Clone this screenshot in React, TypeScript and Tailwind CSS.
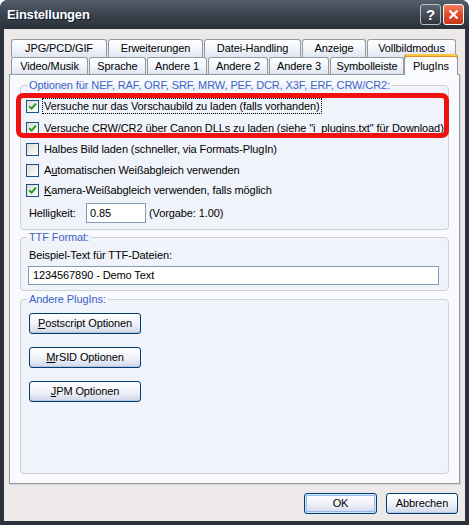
import React from "react";

const row1 = [
  { label: "JPG/PCD/GIF", w: "w-[96px]" },
  { label: "Erweiterungen", w: "w-[95px]" },
  { label: "Datei-Handling", w: "w-[97px]" },
  { label: "Anzeige", w: "w-[64px]" },
  { label: "Vollbildmodus", w: "w-[89px]" },
];

const row2 = [
  { label: "Video/Musik", w: "w-[77px]" },
  { label: "Sprache", w: "w-[57px]" },
  { label: "Andere 1", w: "w-[60px]" },
  { label: "Andere 2", w: "w-[60px]" },
  { label: "Andere 3", w: "w-[60px]" },
  { label: "Symbolleiste", w: "w-[74px]" },
];

const Tab = ({ label, w, h }: { label: string; w: string; h: string }) => (
  <div
    className={`${w} ${h} shrink-0 flex items-center justify-center border border-b-0 border-[#919b9c] rounded-t-[3px] bg-gradient-to-b from-white via-[#f3f5fb] to-[#dfe5f2] leading-none whitespace-nowrap`}
  >
    {label}
  </div>
);

const Check = ({ checked }: { checked?: boolean }) => (
  <span className="w-[13px] h-[13px] shrink-0 border border-[#1c5180] bg-gradient-to-br from-[#dcdcd7] to-white flex items-center justify-center">
    {checked && (
      <svg width="9" height="9" viewBox="0 0 9 9">
        <path d="M1.2 4.2 L3.6 6.6 L7.9 1.6" stroke="#21a121" strokeWidth="2" fill="none" />
      </svg>
    )}
  </span>
);

const XpButton = ({ children, w, def }: { children: React.ReactNode; w: string; def?: boolean }) => (
  <button
    className={`${w} h-[21px] shrink-0 rounded-[3px] border border-[#003c74] bg-gradient-to-b from-white via-[#f1f3f9] to-[#cfd8ea] flex items-center justify-center leading-none text-black ${
      def ? "shadow-[inset_0_0_0_1px_#cee7ff,inset_0_0_0_2px_#98b8ea]" : "shadow-[inset_0_-1px_0_#b8c3dc]"
    }`}
  >
    {children}
  </button>
);

export default function App() {
  return (
    <div className="w-[469px] h-[525px] bg-white font-['Liberation_Sans',Arial,sans-serif] text-[11px] tracking-[-0.1px] text-black">
      <div className="w-[469px] h-[525px] flex flex-col rounded-t-[8px] bg-[#2c323b] overflow-hidden">
        {/* Title bar */}
        <div className="h-[29px] shrink-0 flex items-center pl-[7px] pr-[5px] bg-gradient-to-b from-[#55606d] via-[#3a424d] to-[#2b313a]">
          <span className="text-white font-bold text-[13px] tracking-[-0.2px] [text-shadow:1px_1px_0_#0b1a33]">
            Einstellungen
          </span>
          <div className="ml-auto flex gap-[2px]">
            <div className="w-[21px] h-[21px] rounded-[3px] border border-[#b8bec8] bg-gradient-to-b from-[#5d6672] to-[#2f353e] flex items-center justify-center text-white font-bold text-[15px] leading-none">
              ?
            </div>
            <div className="w-[21px] h-[21px] rounded-[3px] border border-white bg-gradient-to-b from-[#f08060] via-[#e0492a] to-[#c8381c] flex items-center justify-center">
              <svg width="11" height="11" viewBox="0 0 11 11">
                <path d="M1.5 1.5 L9.5 9.5 M9.5 1.5 L1.5 9.5" stroke="white" strokeWidth="2.2" />
              </svg>
            </div>
          </div>
        </div>

        {/* Client area */}
        <div className="flex-1 mx-[4px] mb-[4px] bg-[#ece9e8] pt-[10px] px-[5px] flex flex-col">
          <div className="flex gap-px ml-[2px] h-[18px]">
            {row1.map((t) => (
              <Tab key={t.label} label={t.label} w={t.w} h="h-[18px]" />
            ))}
          </div>
          <div className="flex items-end ml-[2px] h-[17px]">
            <div className="flex gap-px">
              {row2.map((t) => (
                <Tab key={t.label} label={t.label} w={t.w} h="h-[17px]" />
              ))}
            </div>
            <div className="relative z-10 -mb-px w-[54px] h-[21px] shrink-0 flex items-center justify-center border border-b-0 border-[#919b9c] border-t-0 rounded-t-[3px] bg-[#fafbfd] shadow-[inset_0_2px_0_#ffc83c,inset_0_3px_0_#e68b2c] pt-[3px] leading-none">
              PlugIns
            </div>
          </div>

          {/* Panel */}
          <div className="relative h-[410px] border border-[#919b9c] bg-[#f9fafd] shadow-[1px_1px_0_#d0d4dc] px-[10px] pt-[3px]">
            <fieldset className="border border-[#d0d0d8] rounded-[4px] bg-[#f1f3fb] pl-[5px] pr-[2px] pt-[3px] pb-[6px] m-0 whitespace-nowrap">
              <legend className="ml-[1px] px-[2px] leading-[14px] text-[#3a62c8]">
                Optionen für NEF, RAF, ORF, SRF, MRW, PEF, DCR, X3F, ERF, CRW/CR2:
              </legend>
              <div className="h-[22px] flex items-center gap-[5px]">
                <Check checked />
                <span className="outline outline-1 outline-dotted outline-black outline-offset-0 px-[1px] leading-[14px] -ml-[1px]">
                  Versuche nur das Vorschaubild zu laden (falls vorhanden)
                </span>
              </div>
              <div className="h-[22px] flex items-center gap-[5px]">
                <Check checked />
                <span className="whitespace-nowrap">
                  Versuche CRW/CR2 über <span className="underline">C</span>anon DLLs zu laden (siehe "i_plugins.txt" für Download)
                </span>
              </div>
              <div className="h-[21px] flex items-center gap-[5px]">
                <Check />
                <span>Halbes Bild laden (schneller, via Formats-PlugIn)</span>
              </div>
              <div className="h-[20px] flex items-center gap-[5px]">
                <Check />
                <span>
                  A<span className="underline">u</span>tomatischen Weißabgleich verwenden
                </span>
              </div>
              <div className="h-[21px] flex items-center gap-[5px]">
                <Check checked />
                <span>
                  <span className="underline">K</span>amera-Weißabgleich verwenden, falls möglich
                </span>
              </div>
              <div className="mt-[2px] h-[20px] flex items-center pl-[3px]">
                <span className="w-[57px]">Helligkeit:</span>
                <div className="w-[60px] h-[20px] border border-[#7f9db9] bg-white flex items-center pl-[3px]">0.85</div>
                <span className="ml-[3px]">(Vorgabe: 1.00)</span>
              </div>
            </fieldset>

            <fieldset className="border border-[#d0d0d8] rounded-[4px] bg-[#f1f3fb] pl-[7px] pr-[9px] pt-[4px] pb-[5px] m-0">
              <legend className="-ml-[1px] px-[2px] leading-[14px] text-[#3a62c8]">TTF Format:</legend>
              <div className="h-[14px] flex items-center pl-[1px]">Beispiel-Text für TTF-Dateien:</div>
              <div className="mt-[4px] h-[19px] border border-[#7f9db9] bg-white flex items-center pl-[4px]">
                1234567890 - Demo Text
              </div>
            </fieldset>

            <fieldset className="mt-[1px] border border-[#d0d0d8] rounded-[4px] bg-[#f1f3fb] pl-[8px] pr-[5px] pt-[7px] pb-[71px] m-0 flex flex-col gap-[13px]">
              <legend className="-ml-[2px] px-[2px] leading-[14px] text-[#3a62c8]">Andere PlugIns:</legend>
              <XpButton w="w-[112px]">
                <span>
                  <span className="underline">P</span>ostscript Optionen
                </span>
              </XpButton>
              <XpButton w="w-[112px]">
                <span>
                  <span className="underline">M</span>rSID Optionen
                </span>
              </XpButton>
              <XpButton w="w-[112px]">
                <span>
                  <span className="underline">J</span>PM Optionen
                </span>
              </XpButton>
            </fieldset>

            {/* red highlight annotation */}
            <div className="absolute left-[6px] top-[18px] w-[433px] h-[45px] border-[5px] border-[#f01010] rounded-[7px] pointer-events-none" />
          </div>

          {/* Bottom buttons */}
          <div className="mt-[9px] flex justify-end gap-[9px] pr-[2px]">
            <XpButton w="w-[73px]" def>
              OK
            </XpButton>
            <XpButton w="w-[72px]">Abbrechen</XpButton>
          </div>
        </div>
      </div>
    </div>
  );
}
